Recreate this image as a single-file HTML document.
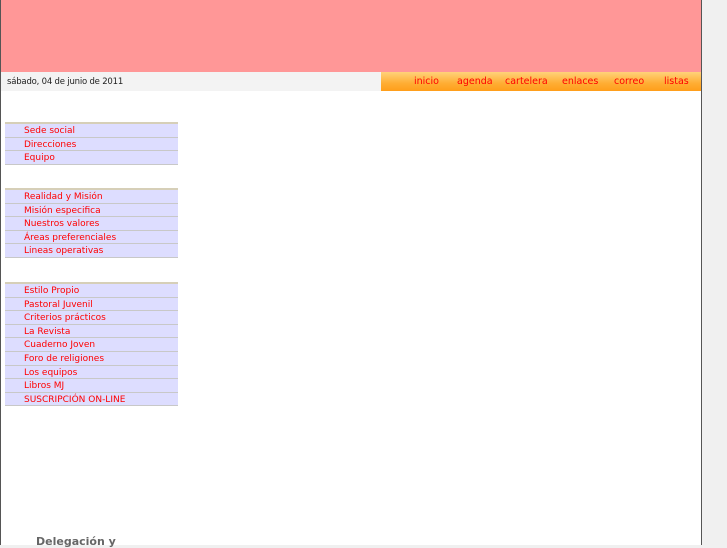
<!DOCTYPE html>
<html><head><meta charset="utf-8"><style>
body{margin:0;width:727px;height:545px;overflow:hidden;background:#f0f0f0;font-family:"DejaVu Sans",sans-serif;position:relative}
#pg{position:absolute;left:0;top:0;width:700px;height:545px;background:#fff;border-left:1px solid #555;border-right:1px solid #555}
#hd{position:absolute;left:0;top:0;width:700px;height:72px;background:#ff9797}
#dt{position:absolute;left:0;top:72px;width:380px;height:19px;background:#f3f3f3;font-size:8.5px;line-height:20px;padding-left:6px;box-sizing:border-box;color:#222;letter-spacing:-0.2px}
#nv{position:absolute;left:380px;top:72px;width:320px;height:19px;background:linear-gradient(#ffd27a,#ffad33 60%,#ff9e1a);font-size:9.5px;line-height:20px;color:#f00}
#nv span{position:absolute;top:0}
.g{position:absolute;left:4px;width:173px;border-top:2px solid #d6cfb8}
.g div{height:12.6px;background:#ddddff;border-bottom:1px solid #c8c8c8;font-size:9px;line-height:14px;color:#f00;padding-left:19px}
#dl{position:absolute;left:35px;top:535px;font-size:11px;font-weight:bold;color:#666}
</style></head><body>
<div id="pg">
<div id="hd"></div>
<div id="dt">sábado, 04 de junio de 2011</div>
<div id="nv"><span style="left:33px">inicio</span><span style="left:76px">agenda</span><span style="left:124px">cartelera</span><span style="left:181px">enlaces</span><span style="left:233px">correo</span><span style="left:283px">listas</span></div>
<div class="g" style="top:122px"><div>Sede social</div><div>Direcciones</div><div>Equipo</div></div>
<div class="g" style="top:188px"><div>Realidad y Misión</div><div>Misión especifica</div><div>Nuestros valores</div><div>Áreas preferenciales</div><div>Lineas operativas</div></div>
<div class="g" style="top:282px"><div>Estilo Propio</div><div>Pastoral Juvenil</div><div>Criterios prácticos</div><div>La Revista</div><div>Cuaderno Joven</div><div>Foro de religiones</div><div>Los equipos</div><div>Libros MJ</div><div>SUSCRIPCIÓN ON-LINE</div></div>
<div id="dl">Delegación y</div>
</div>
</body></html>
